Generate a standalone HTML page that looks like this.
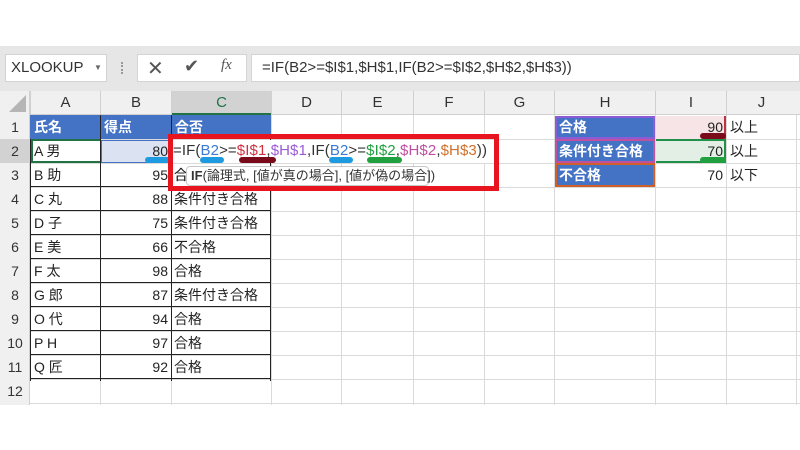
<!DOCTYPE html><html><head><meta charset="utf-8"><style>
*{margin:0;padding:0;box-sizing:border-box}
body{width:800px;height:450px;background:#fff;position:relative;overflow:hidden;font-family:"Liberation Sans","Noto Sans CJK JP",sans-serif;font-size:14px;color:#222}
.a{position:absolute}
.cell{position:absolute;height:24px;line-height:24px;white-space:nowrap;overflow:visible}
</style></head><body>
<div class="a" style="left:0;top:46px;width:800px;height:45px;background:#e6e6e6"></div>
<div class="a" style="left:5px;top:54px;width:102px;height:28px;background:#fff;border:1px solid #d4d4d4;line-height:26px;padding-left:5px;font-size:15px;color:#333">XLOOKUP<span style="position:absolute;left:88px;top:0;font-size:8px;color:#666">▼</span></div>
<div class="a" style="left:121px;top:62px;width:2px;height:12px;border-left:2px dotted #999"></div>
<div class="a" style="left:137px;top:54px;width:110px;height:28px;background:#fff;border:1px solid #d4d4d4"></div>
<div class="a" style="left:147px;top:56px;font-size:20px;color:#555">✕</div>
<div class="a" style="left:184px;top:56px;font-size:18px;color:#555">✔</div>
<div class="a" style="left:221px;top:57px;font-size:15px;color:#555;font-family:'Liberation Serif',serif;font-style:italic">fx</div>
<div class="a" style="left:251px;top:54px;width:549px;height:28px;background:#fff;border:1px solid #d4d4d4;line-height:26px;padding-left:10px;font-size:15px;color:#333">=IF(B2&gt;=$I$1,$H$1,IF(B2&gt;=$I$2,$H$2,$H$3))</div>
<div class="a" style="left:0;top:91px;width:800px;height:24px;background:#f0f0f0;border-bottom:1px solid #d0d0d0"></div>
<div class="a" style="left:0;top:91px;width:30px;height:314px;background:#f0f0f0;border-right:1px solid #d0d0d0"></div>
<div class="a" style="left:9px;top:95px;width:0;height:0;border-left:17px solid transparent;border-bottom:17px solid #b5b5b5"></div>
<div class="a" style="left:171px;top:91px;width:100px;height:24px;background:#d2d2d2;border-bottom:2px solid #217346"></div>
<div class="a" style="left:0;top:139px;width:30px;height:24px;background:#d2d2d2"></div>
<div id="grid"></div>
<script>
var cols=[30,100,171,271,341,413,484,554,655,726,796];var L="ABCDEFGHIJ";var h='';
for(var i=0;i<10;i++){h+='<div class="a" style="left:'+cols[i]+'px;top:91px;width:'+(cols[i+1]-cols[i])+'px;height:24px;line-height:24px;text-align:center;font-size:15px;color:'+(i==2?'#217346':'#333')+';border-left:1px solid #d0d0d0">'+L[i]+'</div>';
h+='<div class="a" style="left:'+cols[i+1]+'px;top:115px;width:1px;height:290px;background:#dadada"></div>';}
for(var r=0;r<12;r++){var y=115+r*24;h+='<div class="a" style="left:0;top:'+y+'px;width:30px;height:24px;line-height:24px;text-align:center;font-size:14px;color:#333">'+(r+1)+'</div>';
h+='<div class="a" style="left:30px;top:'+(y+24)+'px;width:770px;height:1px;background:#dadada"></div>';}
document.getElementById('grid').innerHTML=h;
</script>
<div class="a" style="left:30px;top:115px;width:241px;height:24px;background:#4472c4"></div>
<div class="cell" style="left:34px;top:115px;color:#fff;font-weight:bold">氏名</div>
<div class="cell" style="left:104px;top:115px;color:#fff;font-weight:bold">得点</div>
<div class="cell" style="left:175px;top:115px;color:#fff;font-weight:bold">合否</div>
<div class="a" style="left:30px;top:139px;width:241px;height:242px;border:1px solid #222;border-top:none;border-bottom:none"></div>
<div class="a" style="left:100px;top:115px;width:1px;height:266px;background:#222"></div>
<div class="a" style="left:171px;top:115px;width:1px;height:266px;background:#222"></div>
<div class="a" style="left:30px;top:139px;width:241px;height:243px;background:repeating-linear-gradient(to bottom,transparent 0,transparent 23px,#222 23px,#222 24px)"></div>
<div class="a" style="left:101px;top:140px;width:70px;height:23px;background:#dbe3f3;border:1px solid #4472c4"></div>
<div class="a" style="left:31px;top:139px;width:69px;height:24px;border:2px solid #217346;border-right:none"></div>
<div id="rows"></div>
<script>
var d=[["A 男",80,""],["B 助",95,"合"],["C 丸",88,"条件付き合格"],["D 子",75,"条件付き合格"],["E 美",66,"不合格"],["F 太",98,"合格"],["G 郎",87,"条件付き合格"],["O 代",94,"合格"],["P H",97,"合格"],["Q 匠",92,"合格"]];var h='';
for(var i=0;i<10;i++){var y=139+i*24;h+='<div class="cell" style="left:34px;top:'+y+'px">'+d[i][0]+'</div><div class="cell" style="left:100px;width:68px;text-align:right;top:'+y+'px">'+d[i][1]+'</div><div class="cell" style="left:174px;top:'+y+'px">'+d[i][2]+'</div>';}
document.getElementById('rows').innerHTML=h;
</script>
<div class="a" style="left:555px;top:116px;width:100px;height:71px;background:#4472c4"></div>
<div class="a" style="left:555px;top:116px;width:100px;height:23px;border:2px solid #8b5cd6"></div>
<div class="a" style="left:555px;top:139px;width:100px;height:24px;border:2px solid #c050a0"></div>
<div class="a" style="left:555px;top:163px;width:100px;height:24px;border:2px solid #d0602a"></div>
<div class="cell" style="left:559px;top:115px;color:#fff;font-weight:bold">合格</div>
<div class="cell" style="left:559px;top:139px;color:#fff;font-weight:bold">条件付き合格</div>
<div class="cell" style="left:559px;top:163px;color:#fff;font-weight:bold">不合格</div>
<div class="a" style="left:656px;top:116px;width:70px;height:23px;background:#f7e4e6;border-right:2px solid #c03040"></div>
<div class="a" style="left:656px;top:139px;width:70px;height:24px;background:#e3efe5;border:2px solid #21904a;border-left:none"></div>
<div class="cell" style="left:656px;top:115px;width:67px;text-align:right">90</div>
<div class="cell" style="left:656px;top:139px;width:67px;text-align:right">70</div>
<div class="cell" style="left:656px;top:163px;width:67px;text-align:right">70</div>
<div class="a" style="left:700px;top:133px;width:26px;height:6px;border-radius:3px;background:#7a0a1a"></div>
<div class="a" style="left:700px;top:157px;width:26px;height:6px;border-radius:3px;background:#21a040"></div>
<div class="cell" style="left:730px;top:115px">以上</div>
<div class="cell" style="left:730px;top:139px">以上</div>
<div class="cell" style="left:730px;top:163px">以下</div>
<div class="a" style="left:172px;top:140px;width:322px;height:23px;background:#fff"></div>
<div class="cell" style="left:173px;top:139px;font-size:15px;color:#333;letter-spacing:0.1px">=IF(<span style="color:#3a7bd5">B2</span>&gt;=<span style="color:#d03040">$I$1</span>,<span style="color:#9a5cd6">$H$1</span>,IF(<span style="color:#3a7bd5">B2</span>&gt;=<span style="color:#21a040">$I$2</span>,<span style="color:#c050a0">$H$2</span>,<span style="color:#d0702a">$H$3</span>))</div>
<div class="a" style="left:145px;top:157px;width:25px;height:6px;border-radius:3px;background:#1e9be0"></div>
<div class="a" style="left:200px;top:157px;width:24px;height:6px;border-radius:3px;background:#1e9be0"></div>
<div class="a" style="left:239px;top:157px;width:37px;height:6px;border-radius:3px;background:#7a0a1a"></div>
<div class="a" style="left:329px;top:157px;width:24px;height:6px;border-radius:3px;background:#1e9be0"></div>
<div class="a" style="left:367px;top:157px;width:35px;height:6px;border-radius:3px;background:#21a040"></div>
<div class="cell" style="left:174px;top:163px">合</div>
<div class="a" style="left:186px;top:166px;width:243px;height:20px;background:#fff;border:1px solid #c8c8c8;border-radius:4px;line-height:18px;font-size:13px;padding-left:4px;color:#333;white-space:nowrap"><b>IF</b>(論理式, [値が真の場合], [値が偽の場合])</div>
<div class="a" style="left:168px;top:134px;width:331px;height:57px;border:5px solid #e8141e"></div>
</body></html>
